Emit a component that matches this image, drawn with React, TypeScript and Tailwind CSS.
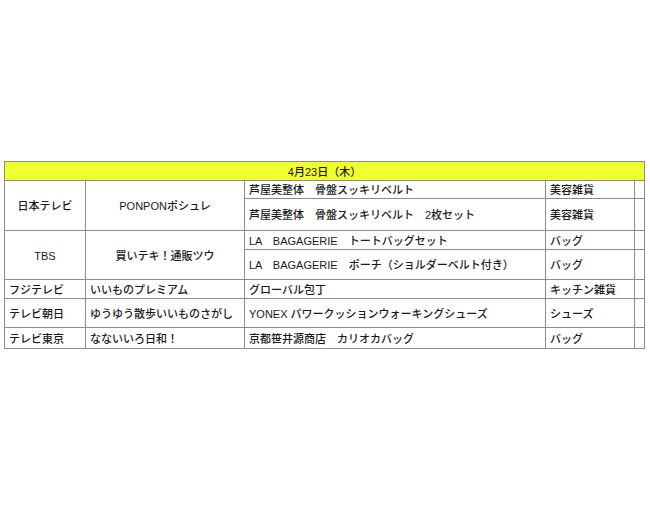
import React from "react";

const font = { fontFamily: '"Liberation Sans", "Noto Sans CJK JP", sans-serif' };

export default function App() {
  const b = "border border-[#8c8c8c]";
  const txt = "px-[4px] pt-[2px] text-[11px] leading-none font-medium text-[#1a1a1a] whitespace-nowrap overflow-hidden";
  return (
    <div className="w-[650px] h-[510px] bg-white pt-[161px] pl-[4px]" style={font}>
      <table className="border-collapse table-fixed w-[640px] border border-[#555]">
        <colgroup>
          <col className="w-[81px]" />
          <col className="w-[159px]" />
          <col className="w-[301px]" />
          <col className="w-[89px]" />
          <col className="w-[10px]" />
        </colgroup>
        <tbody>
          <tr className="h-[19px]">
            <td colSpan={5} className={`${b} ${txt} bg-[#f0ff2e] text-center`}>4月23日（木）</td>
          </tr>
          <tr className="h-[18px]">
            <td rowSpan={2} className={`${b} ${txt} text-center`}>日本テレビ</td>
            <td rowSpan={2} className={`${b} ${txt} text-center`}>PONPONポシュレ</td>
            <td className={`${b} ${txt}`}>芦屋美整体　骨盤スッキリベルト</td>
            <td className={`${b} ${txt}`}>美容雑貨</td>
            <td className={b}></td>
          </tr>
          <tr className="h-[32px]">
            <td className={`${b} ${txt}`}>芦屋美整体　骨盤スッキリベルト　2枚セット</td>
            <td className={`${b} ${txt}`}>美容雑貨</td>
            <td className={b}></td>
          </tr>
          <tr className="h-[19px]">
            <td rowSpan={2} className={`${b} ${txt} text-center`}>TBS</td>
            <td rowSpan={2} className={`${b} ${txt} text-center`}>買いテキ！通販ツウ</td>
            <td className={`${b} ${txt}`}>LA　BAGAGERIE　トートバッグセット</td>
            <td className={`${b} ${txt}`}>バッグ</td>
            <td className={b}></td>
          </tr>
          <tr className="h-[30px]">
            <td className={`${b} ${txt}`}>LA　BAGAGERIE　ポーチ（ショルダーベルト付き）</td>
            <td className={`${b} ${txt}`}>バッグ</td>
            <td className={b}></td>
          </tr>
          <tr className="h-[19px]">
            <td className={`${b} ${txt}`}>フジテレビ</td>
            <td className={`${b} ${txt}`}>いいものプレミアム</td>
            <td className={`${b} ${txt}`}>グローバル包丁</td>
            <td className={`${b} ${txt}`}>キッチン雑貨</td>
            <td className={b}></td>
          </tr>
          <tr className="h-[29px]">
            <td className={`${b} ${txt}`}>テレビ朝日</td>
            <td className={`${b} ${txt}`}>ゆうゆう散歩いいものさがし</td>
            <td className={`${b} ${txt}`}>YONEX パワークッションウォーキングシューズ</td>
            <td className={`${b} ${txt}`}>シューズ</td>
            <td className={b}></td>
          </tr>
          <tr className="h-[21px]">
            <td className={`${b} ${txt}`}>テレビ東京</td>
            <td className={`${b} ${txt}`}>なないいろ日和！</td>
            <td className={`${b} ${txt}`}>京都笹井源商店　カリオカバッグ</td>
            <td className={`${b} ${txt}`}>バッグ</td>
            <td className={b}></td>
          </tr>
        </tbody>
      </table>
    </div>
  );
}
